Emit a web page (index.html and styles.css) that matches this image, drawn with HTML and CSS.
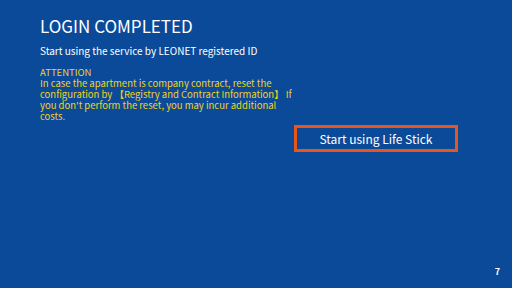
FILE: index.html
```html
<!DOCTYPE html>
<html lang="en">
<head>
  <meta charset="UTF-8" />
  <meta name="viewport" content="width=device-width, initial-scale=1" />
  <title>Login Completed</title>
  <link rel="stylesheet" href="styles.css">
</head>
<body>
<div class="page">
  <h1 class="title">LOGIN COMPLETED</h1>
  <p class="lead">Start using the service by LEONET registered ID</p>

  <!-- Attention notice -->
  <p class="attention">
    ATTENTION<br>
    In case the apartment is company contract, reset the<br>
    configuration by 【Registry and Contract Information】 If<br>
    you don't perform the reset, you may incur additional<br>
    costs.
  </p>

  <div class="actions">
    <button class="start-btn">Start using Life Stick</button>
  </div>

  <div class="page-no">7</div>
</div>
</body>
</html>
```

FILE: styles.css
```css
html, body {
  margin: 0;
  padding: 0;
}
body {
  font-family: "Noto Sans CJK JP", "Noto Sans", sans-serif;
  background: #0b4a99;
  color: #fff;
}
.page {
  display: flex;
  flex-direction: column;
  width: 512px;
  height: 288px;
  box-sizing: border-box;
  padding: 16px 0 0 40px;
}
.title {
  margin: 0;
  font-size: 17px;
  line-height: 20px;
  font-weight: 400;
}
.lead {
  margin: 9px 0 0;
  font-size: 10px;
  line-height: 12px;
  font-weight: 400;
}
.attention {
  margin: 10px 0 0;
  font-size: 9.5px;
  line-height: 11px;
  font-weight: 400;
  color: #f3d21a;
}
.actions {
  display: flex;
  justify-content: flex-end;
  padding-right: 54px;
  margin-top: 3px;
}
.start-btn {
  width: 164px;
  height: 27px;
  padding: 0;
  border: 3px solid #e8561c;
  background: #0b4a99;
  color: #fff;
  font-family: inherit;
  font-size: 12px;
  line-height: 21px;
  font-weight: 400;
}
.page-no {
  margin-top: auto;
  align-self: flex-end;
  padding: 0 12px 11px 0;
  font-size: 9px;
  line-height: 10px;
  font-weight: 700;
}
```
